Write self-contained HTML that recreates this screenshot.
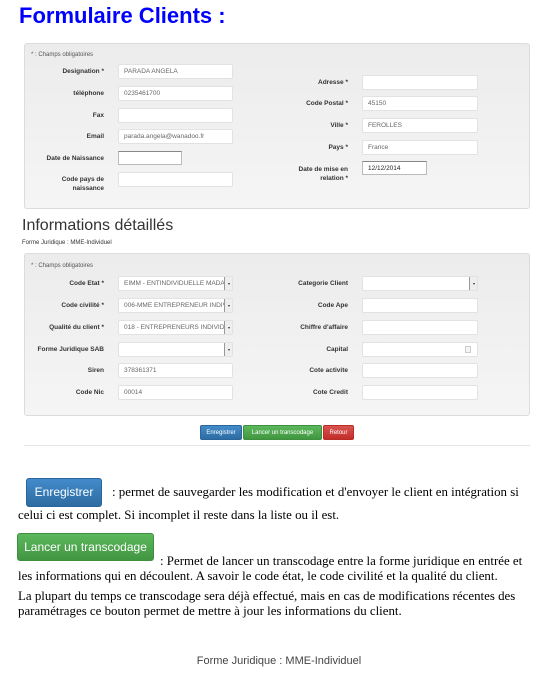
<!DOCTYPE html>
<html><head><meta charset="utf-8"><style>
*{margin:0;padding:0;box-sizing:border-box}
body{width:538px;height:682px;background:#fff;position:relative;overflow:hidden;font-family:"Liberation Sans",Arial,sans-serif}
.a{position:absolute}
h1{position:absolute;left:19px;top:3px;font-size:22px;font-weight:bold;color:#0000ff;white-space:nowrap}
.panel{position:absolute;left:24px;width:506px;background:linear-gradient(#ececec,#f5f5f5);border:1px solid #dcdcdc;border-radius:3px}
.req{position:absolute;font-size:6px;color:#555}
.l{position:absolute;font-size:6.5px;font-weight:bold;color:#333;text-align:right;line-height:9px;white-space:nowrap}
.i{position:absolute;height:15px;background:#fff;border:1px solid #e2e2e2;border-radius:2px;font-size:6.5px;color:#666;padding-left:5px;line-height:13px;white-space:nowrap;overflow:hidden}
.d{border:1px solid #bbb;border-top-color:#888;border-radius:0;color:#222}
.sel{padding-right:9px}
.sel:after{content:"";position:absolute;right:0;top:0;width:7px;height:13px;background:#eee;border-left:1px solid #999}
.sel:before{content:"";position:absolute;right:2px;top:6px;border:1.5px solid transparent;border-top:2px solid #333;z-index:2}
.b{position:absolute;color:#fff;font-size:6px;text-align:center;border-radius:2px;line-height:15px;height:15px}
.blue{background:linear-gradient(#428bca,#2d6ca2);border:1px solid #2b669a}
.green{background:linear-gradient(#5cb85c,#419641);border:1px solid #3e8f3e}
.red{background:linear-gradient(#d9534f,#c12e2a);border:1px solid #b92c28}
.t{position:absolute;font-family:"Liberation Serif","Times New Roman",serif;font-size:12.9px;color:#000;white-space:nowrap}
</style></head><body>
<h1>Formulaire Clients :</h1>

<div class="panel" style="top:43px;height:166px"></div>
<div class="req" style="left:31px;top:52px">* : Champs obligatoires</div>
<div class="l" style="right:434px;top:67px">Designation *</div><div class="i" style="left:118px;top:64px;width:115px">PARADA ANGELA</div>
<div class="l" style="right:434px;top:89px">téléphone</div><div class="i" style="left:118px;top:86px;width:115px">0235461700</div>
<div class="l" style="right:434px;top:111px">Fax</div><div class="i" style="left:118px;top:108px;width:115px"></div>
<div class="l" style="right:434px;top:132px">Email</div><div class="i" style="left:118px;top:129px;width:115px">parada.angela@wanadoo.fr</div>
<div class="l" style="right:434px;top:154px">Date de Naissance</div><div class="i d" style="left:118px;top:151px;width:64px;height:14px"></div>
<div class="l" style="right:434px;top:175px">Code pays de<br>naissance</div><div class="i" style="left:118px;top:172px;width:115px"></div>

<div class="l" style="right:190px;top:78px">Adresse *</div><div class="i" style="left:362px;top:75px;width:116px"></div>
<div class="l" style="right:190px;top:99px">Code Postal *</div><div class="i" style="left:362px;top:96px;width:116px">45150</div>
<div class="l" style="right:190px;top:121px">Ville *</div><div class="i" style="left:362px;top:118px;width:116px">FEROLLES</div>
<div class="l" style="right:190px;top:143px">Pays *</div><div class="i" style="left:362px;top:140px;width:116px">France</div>
<div class="l" style="right:190px;top:165px">Date de mise en<br>relation *</div><div class="i d" style="left:362px;top:161px;width:65px;height:14px">12/12/2014</div>

<div class="a" style="left:22px;top:217px;font-size:16px;color:#333">Informations détaillés</div>
<div class="a" style="left:22px;top:240px;font-size:6px;color:#333">Forme Juridique : MME-Individuel</div>

<div class="panel" style="top:253px;height:163px"></div>
<div class="req" style="left:31px;top:263px">* : Champs obligatoires</div>
<div class="l" style="right:434px;top:279px">Code Etat *</div><div class="i sel" style="left:118px;top:276px;width:115px">EIMM - ENTINDIVIDUELLE MADAI</div>
<div class="l" style="right:434px;top:301px">Code civilité *</div><div class="i sel" style="left:118px;top:298px;width:115px">006-MME ENTREPRENEUR INDIV</div>
<div class="l" style="right:434px;top:323px">Qualité du client *</div><div class="i sel" style="left:118px;top:320px;width:115px">018 - ENTREPRENEURS INDIVIDI</div>
<div class="l" style="right:434px;top:345px">Forme Juridique SAB</div><div class="i sel" style="left:118px;top:342px;width:115px"></div>
<div class="l" style="right:434px;top:366px">Siren</div><div class="i" style="left:118px;top:363px;width:115px">378361371</div>
<div class="l" style="right:434px;top:388px">Code Nic</div><div class="i" style="left:118px;top:385px;width:115px">00014</div>

<div class="l" style="right:190px;top:279px">Categorie Client</div><div class="i sel" style="left:362px;top:276px;width:116px"></div>
<div class="l" style="right:190px;top:301px">Code Ape</div><div class="i" style="left:362px;top:298px;width:116px"></div>
<div class="l" style="right:190px;top:323px">Chiffre d'affaire</div><div class="i" style="left:362px;top:320px;width:116px"></div>
<div class="l" style="right:190px;top:345px">Capital</div><div class="i" style="left:362px;top:342px;width:116px"><span style="position:absolute;right:6px;top:3px;width:6px;height:7px;border:1px solid #ccc;background:#f4f4f4"></span></div>
<div class="l" style="right:190px;top:366px">Cote activite</div><div class="i" style="left:362px;top:363px;width:116px"></div>
<div class="l" style="right:190px;top:388px">Cote Credit</div><div class="i" style="left:362px;top:385px;width:116px"></div>

<div class="b blue" style="left:200px;top:425px;width:42px">Enregistrer</div>
<div class="b green" style="left:243px;top:425px;width:79px">Lancer un transcodage</div>
<div class="b red" style="left:323px;top:425px;width:31px">Retour</div>
<div class="a" style="left:24px;top:445px;width:506px;height:1px;background:#e5e5e5"></div>

<div class="b blue" style="left:26px;top:478px;width:76px;height:29px;line-height:27px;font-size:12px;border-radius:3px">Enregistrer</div>
<div class="t" style="left:112px;top:485px">: permet de sauvegarder les modification et d'envoyer le client en intégration si</div>
<div class="t" style="left:18px;top:508px">celui ci est complet. Si incomplet il reste dans la liste ou il est.</div>
<div class="b green" style="left:17px;top:533px;width:137px;height:28px;line-height:26px;font-size:12px;border-radius:3px">Lancer un transcodage</div>
<div class="t" style="left:160px;top:554px">: Permet de lancer un transcodage entre la forme juridique en entrée et</div>
<div class="t" style="left:18px;top:569px">les informations qui en découlent. A savoir le code état, le code civilité et la qualité du client.</div>
<div class="t" style="left:18px;top:589px">La plupart du temps ce transcodage sera déjà effectué, mais en cas de modifications récentes des</div>
<div class="t" style="left:18px;top:604px">paramétrages ce bouton permet de mettre à jour les informations du client.</div>
<div class="a" style="left:0;width:538px;text-align:center;top:655px;font-size:11px;color:#444;padding-left:20px">Forme Juridique : MME-Individuel</div>
</body></html>
